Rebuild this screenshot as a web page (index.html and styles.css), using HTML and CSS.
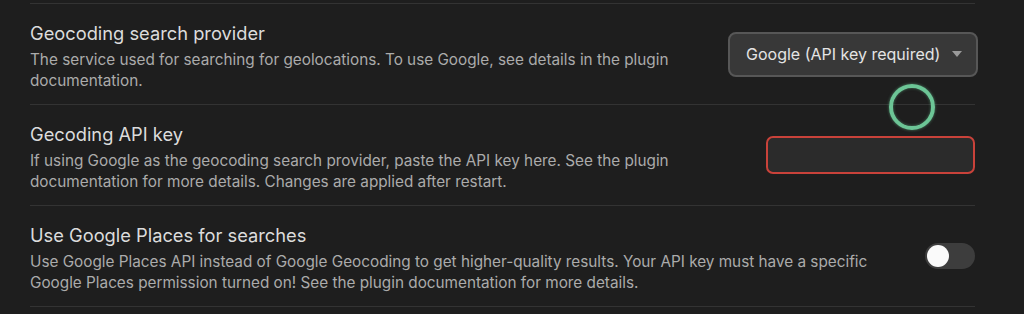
FILE: index.html
```html
<!DOCTYPE html>
<html lang="en">
<head>
    <meta charset="UTF-8">
    <meta name="viewport" content="width=device-width, initial-scale=1.0">
    <title>Geocoding settings</title>
    <link rel="stylesheet" href="styles.css">
</head>
<body>
    <div class="settings">
        <div class="setting-item">
            <div class="setting-info">
                <div class="setting-name">Geocoding search provider</div>
                <div class="setting-desc">The service used for searching for geolocations. To use Google, see details in the plugin documentation.</div>
            </div>
            <div class="setting-control">
                <div class="dropdown">
                    <span>Google (API key required)</span>
                    <span class="dropdown-arrow"></span>
                </div>
            </div>
        </div>

        <div class="setting-item">
            <div class="setting-info">
                <div class="setting-name">Gecoding API key</div>
                <div class="setting-desc">If using Google as the geocoding search provider, paste the API key here. See the plugin documentation for more details. Changes are applied after restart.</div>
            </div>
            <div class="setting-control">
                <input type="text" class="text-input invalid">
            </div>
        </div>

        <div class="setting-item">
            <div class="setting-info wide">
                <div class="setting-name">Use Google Places for searches</div>
                <div class="setting-desc">Use Google Places API instead of Google Geocoding to get higher-quality results. Your API key must have a specific Google Places permission turned on! See the plugin documentation for more details.</div>
            </div>
            <div class="setting-control">
                <div class="toggle"><div class="toggle-knob"></div></div>
            </div>
        </div>
    </div>

    <!-- click highlight left by the screen recorder -->
    <div class="click-ring"></div>
</body>
</html>
```

FILE: styles.css
```css
body {
    margin: 0;
    background-color: #1e1e1e;
    font-family: Inter, "Noto Sans", sans-serif;
    color: #dadada;
}
.settings {
    margin: 3px 49px 0 30px;
    border-top: 1px solid #333;
}
.setting-item {
    display: flex;
    align-items: center;
    padding: 18px 0 13px;
    border-bottom: 1px solid #333;
}
.setting-info {
    width: 655px;
}
.setting-info.wide {
    width: 850px;
}
.setting-name {
    font-size: 18.3px;
    line-height: 22px;
    color: #dcdcdc;
}
.setting-desc {
    margin-top: 5px;
    font-size: 15.3px;
    line-height: 21px;
    color: #ababab;
}
.setting-control {
    flex: 1;
    display: flex;
    justify-content: flex-end;
    margin-bottom: 5px;
}
.dropdown {
    display: flex;
    align-items: center;
    justify-content: space-between;
    box-sizing: border-box;
    width: 250px;
    height: 45px;
    margin-right: -3px;
    padding: 0 14px 0 16px;
    background-color: #383838;
    border: 2px solid #575757;
    border-radius: 8px;
    font-size: 16px;
    color: #e4e4e4;
}
.dropdown-arrow {
    width: 0;
    height: 0;
    border-left: 5px solid transparent;
    border-right: 5px solid transparent;
    border-top: 6px solid #9a9a9a;
}
.text-input {
    box-sizing: border-box;
    width: 209px;
    height: 38px;
    background-color: #2b2b2b;
    border: 2px solid #444;
    border-radius: 7px;
}
.text-input.invalid {
    border-color: #c9423a;
}
.toggle {
    box-sizing: border-box;
    width: 50px;
    height: 26px;
    padding: 2px;
    background-color: #3d3d3d;
    border-radius: 13px;
}
.toggle-knob {
    width: 22px;
    height: 22px;
    border-radius: 50%;
    background-color: #fafafa;
}
.click-ring {
    position: absolute;
    left: 889px;
    top: 84px;
    width: 38px;
    height: 38px;
    border: 4px solid #6cc596;
    border-radius: 50%;
    box-shadow: 0 0 3px rgba(108, 197, 150, 0.6), inset 0 0 3px rgba(108, 197, 150, 0.5);
}
```
